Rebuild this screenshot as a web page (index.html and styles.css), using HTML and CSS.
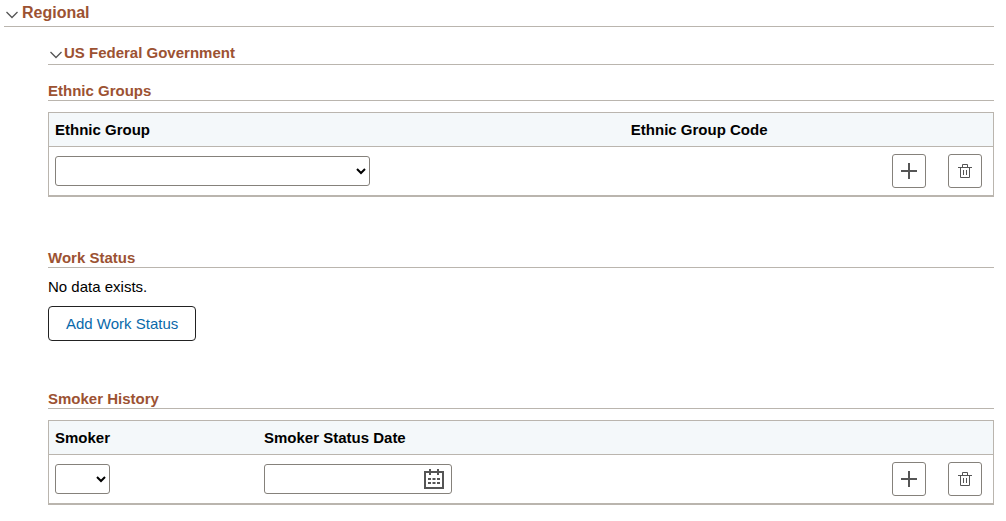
FILE: index.html
```
<!DOCTYPE html>
<html lang="en">

<head>
    <meta charset="UTF-8">
    <meta name="viewport" content="width=device-width, initial-scale=1.0">
    <title>Regional</title>
    <link rel="stylesheet" href="styles.css">
</head>

<body>
    <!-- Shared icons -->
    <svg class="sprite" aria-hidden="true">
        <symbol id="icon-chevron" viewBox="0 0 12 8">
            <path d="M0.5 1L6 6.5L11.5 1" fill="none" stroke="#555" stroke-width="1.3" />
        </symbol>
        <symbol id="icon-plus" viewBox="0 0 16 16">
            <path d="M8 0V16M0 8H16" fill="none" stroke="#555" stroke-width="2" />
        </symbol>
        <symbol id="icon-trash" viewBox="0 0 14 14">
            <path d="M0 3.5H14M4.5 3.5V0.5H9.5V3.5M2.5 3.5V13.5H11.5V3.5M5.5 6V11M8.5 6V11" fill="none" stroke="#555" stroke-width="1" />
        </symbol>
        <symbol id="icon-calendar" viewBox="0 0 20 20">
            <path d="M1 3H19V19H1ZM6 0V6M14 0V6" fill="none" stroke="#555" stroke-width="2" />
            <path d="M4 10H16M4 14H16" fill="none" stroke="#555" stroke-width="2" stroke-dasharray="3 1.5" />
        </symbol>
    </svg>

    <h1 class="section-title">
        <button type="button" class="toggle" aria-expanded="true">
            <svg class="chevron"><use href="#icon-chevron" /></svg>Regional
        </button>
    </h1>

    <main class="content">
        <h2 class="group-title country">
            <button type="button" class="toggle" aria-expanded="true">
                <svg class="chevron"><use href="#icon-chevron" /></svg>US Federal Government
            </button>
        </h2>

        <!-- Ethnic groups -->
        <section class="ethnic">
            <h3 class="group-title">Ethnic Groups</h3>
            <table class="grid">
                <thead>
                    <tr>
                        <th class="col-group" id="ethnic-group">Ethnic Group</th>
                        <th id="ethnic-code">Ethnic Group Code</th>
                        <td class="col-actions"></td>
                    </tr>
                </thead>
                <tbody>
                    <tr>
                        <td><select class="field select-group" aria-labelledby="ethnic-group"><option></option></select></td>
                        <td></td>
                        <td>
                            <div class="actions">
                                <button type="button" class="icon-button" aria-label="Add ethnic group"><svg class="plus"><use href="#icon-plus" /></svg></button>
                                <button type="button" class="icon-button" aria-label="Delete ethnic group"><svg class="trash"><use href="#icon-trash" /></svg></button>
                            </div>
                        </td>
                    </tr>
                </tbody>
            </table>
        </section>

        <!-- Work status -->
        <section class="work">
            <h3 class="group-title">Work Status</h3>
            <p class="message">No data exists.</p>
            <button type="button" class="add-button">Add Work Status</button>
        </section>

        <!-- Smoker history -->
        <section class="smoking">
            <h3 class="group-title">Smoker History</h3>
            <table class="grid">
                <thead>
                    <tr>
                        <th class="col-smoker" id="smoker">Smoker</th>
                        <th id="smoker-date">Smoker Status Date</th>
                        <td class="col-actions"></td>
                    </tr>
                </thead>
                <tbody>
                    <tr>
                        <td><select class="field select-smoker" aria-labelledby="smoker"><option></option></select></td>
                        <td>
                            <div class="field date-field">
                                <input type="text" class="date-input" aria-labelledby="smoker-date">
                                <button type="button" class="date-button" aria-label="Choose date"><svg class="calendar"><use href="#icon-calendar" /></svg></button>
                            </div>
                        </td>
                        <td>
                            <div class="actions">
                                <button type="button" class="icon-button" aria-label="Add smoker history"><svg class="plus"><use href="#icon-plus" /></svg></button>
                                <button type="button" class="icon-button" aria-label="Delete smoker history"><svg class="trash"><use href="#icon-trash" /></svg></button>
                            </div>
                        </td>
                    </tr>
                </tbody>
            </table>
        </section>
    </main>
</body>

</html>
```
FILE: styles.css
```
* {
    box-sizing: border-box;
}

/* Body styling */
body {
    margin: 0;
    padding: 4px 12px 16px 4px;
    background-color: #fff;
    color: #000;
    font-family: Arial, "Liberation Sans", sans-serif;
    font-size: 15px;
    line-height: 18px;
}

button,
input,
select {
    font: inherit;
}

button {
    padding: 0;
    cursor: pointer;
}

svg {
    display: block;
}

.sprite {
    display: none;
}

/* Headings */
.section-title,
.group-title {
    margin: 0;
    border-bottom: 1px solid #bab5ae;
    color: #9c5232;
    font-size: 15px;
    font-weight: bold;
}

.section-title {
    padding-bottom: 4px;
    font-size: 16px;
}

.country {
    padding-bottom: 2px;
}

.toggle {
    display: flex;
    align-items: center;
    gap: 4px;
    padding-left: 2px;
    border: none;
    background: none;
    color: inherit;
}

.country .toggle {
    gap: 2px;
}

.chevron {
    width: 12px;
    height: 8px;
    margin-top: 4px;
}

/* Indented content */
.content {
    padding: 17px 0 0 44px;
}

.ethnic {
    padding-top: 17px;
}

.work {
    padding-top: 52px;
}

.smoking {
    padding-top: 49px;
}

/* Data grids */
.grid {
    width: 100%;
    margin-top: 11px;
    border: 1px solid #bab5ae;
    border-bottom-width: 2px;
    border-spacing: 0;
    table-layout: fixed;
}

.grid th,
.grid td {
    height: 48px;
    padding: 0 6px;
    text-align: left;
}

.grid thead th,
.grid thead td {
    height: 34px;
    border-bottom: 1px solid #bab5ae;
    background-color: #f4f8fa;
}

.col-group {
    width: 61%;
}

.col-smoker {
    width: 209px;
}

.col-actions {
    width: 114px;
}

/* Form fields */
.field {
    display: block;
    height: 30px;
    border: 1px solid #85817b;
    border-radius: 3px;
    background-color: #fff;
}

.select-group {
    width: 315px;
}

.select-smoker {
    width: 55px;
}

.date-field {
    display: flex;
    align-items: center;
    width: 188px;
    padding-right: 7px;
}

.date-input {
    flex: 1;
    min-width: 0;
    height: 100%;
    border: none;
    background: none;
}

.date-button {
    border: none;
    background: none;
}

.calendar {
    width: 20px;
    height: 20px;
}

/* Row actions */
.actions {
    display: flex;
    justify-content: flex-end;
    gap: 22px;
    padding-right: 5px;
}

.icon-button {
    display: flex;
    align-items: center;
    justify-content: center;
    width: 34px;
    height: 34px;
    border: 1px solid #85817b;
    border-radius: 3px;
    background-color: #fff;
}

.plus {
    width: 16px;
    height: 16px;
}

.trash {
    width: 14px;
    height: 14px;
}

/* Work status */
.message {
    margin: 10px 0;
}

.add-button {
    height: 35px;
    padding: 0 17px;
    border: 1px solid #222;
    border-radius: 4px;
    background-color: #fff;
    color: #0969aa;
}
```
